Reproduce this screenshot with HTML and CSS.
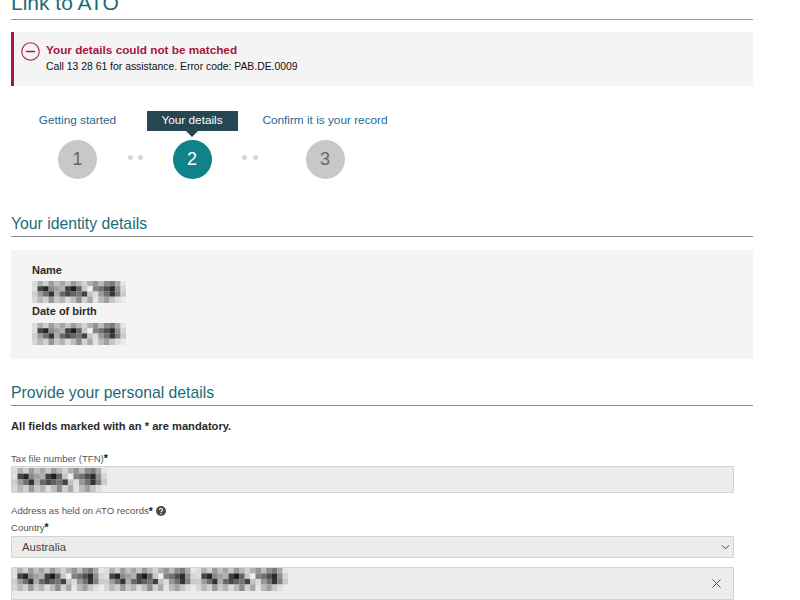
FILE: index.html
```html
<!DOCTYPE html>
<html lang="en">
<head>
<meta charset="utf-8">
<title>Link to ATO</title>
<link rel="stylesheet" href="styles.css">
</head>
<body>
<svg class="defs" width="0" height="0" aria-hidden="true">
  <defs>
    <filter id="soft" x="-5%" y="-5%" width="110%" height="110%"><feGaussianBlur stdDeviation="0.07 0.09"/></filter>
    <g id="mosaic" filter="url(#soft)">
      <rect width="17" height="4.2" fill="#d0d0d0"/>
      <!-- row 0 -->
      <rect x="0" y="0" width="1" height="1" fill="#dcdcdc"/><rect x="1" y="0" width="1" height="1" fill="#b0b0b0"/><rect x="2" y="0" width="1" height="1" fill="#cfcfcf"/><rect x="3" y="0" width="1" height="1" fill="#9c9c9c"/><rect x="4" y="0" width="1" height="1" fill="#c0c0c0"/><rect x="5" y="0" width="1" height="1" fill="#a6a6a6"/><rect x="6" y="0" width="1" height="1" fill="#c6c6c6"/><rect x="7" y="0" width="1" height="1" fill="#9a9a9a"/><rect x="8" y="0" width="1" height="1" fill="#b8b8b8"/><rect x="9" y="0" width="1" height="1" fill="#d4d4d4"/><rect x="10" y="0" width="1" height="1" fill="#b0b0b0"/><rect x="11" y="0" width="1" height="1" fill="#949494"/><rect x="12" y="0" width="1" height="1" fill="#bcbcbc"/><rect x="13" y="0" width="1" height="1" fill="#8c8c8c"/><rect x="14" y="0" width="1" height="1" fill="#7a7a7a"/><rect x="15" y="0" width="1" height="1" fill="#ababab"/><rect x="16" y="0" width="1" height="1" fill="#e6e6e6"/>
      <!-- row 1 -->
      <rect x="0" y="1" width="1" height="1" fill="#dedede"/><rect x="1" y="1" width="1" height="1" fill="#444444"/><rect x="2" y="1" width="1" height="1" fill="#282828"/><rect x="3" y="1" width="1" height="1" fill="#888888"/><rect x="4" y="1" width="1" height="1" fill="#a0a0a0"/><rect x="5" y="1" width="1" height="1" fill="#b0b0b0"/><rect x="6" y="1" width="1" height="1" fill="#404040"/><rect x="7" y="1" width="1" height="1" fill="#1e1e1e"/><rect x="8" y="1" width="1" height="1" fill="#646464"/><rect x="9" y="1" width="1" height="1" fill="#c8c8c8"/><rect x="10" y="1" width="1" height="1" fill="#f0f0f0"/><rect x="11" y="1" width="1" height="1" fill="#828282"/><rect x="12" y="1" width="1" height="1" fill="#707070"/><rect x="13" y="1" width="1" height="1" fill="#4e4e4e"/><rect x="14" y="1" width="1" height="1" fill="#2c2c2c"/><rect x="15" y="1" width="1" height="1" fill="#909090"/><rect x="16" y="1" width="1" height="1" fill="#d6d6d6"/>
      <!-- row 2 -->
      <rect x="0" y="2" width="1" height="1" fill="#cecece"/><rect x="1" y="2" width="1" height="1" fill="#9c9c9c"/><rect x="2" y="2" width="1" height="1" fill="#707070"/><rect x="3" y="2" width="1" height="1" fill="#323232"/><rect x="4" y="2" width="1" height="1" fill="#acacac"/><rect x="5" y="2" width="1" height="1" fill="#686868"/><rect x="6" y="2" width="1" height="1" fill="#464646"/><rect x="7" y="2" width="1" height="1" fill="#646464"/><rect x="8" y="2" width="1" height="1" fill="#747474"/><rect x="9" y="2" width="1" height="1" fill="#424242"/><rect x="10" y="2" width="1" height="1" fill="#c4c4c4"/><rect x="11" y="2" width="1" height="1" fill="#dcdcdc"/><rect x="12" y="2" width="1" height="1" fill="#989898"/><rect x="13" y="2" width="1" height="1" fill="#727272"/><rect x="14" y="2" width="1" height="1" fill="#363636"/><rect x="15" y="2" width="1" height="1" fill="#808080"/><rect x="16" y="2" width="1" height="1" fill="#cacaca"/>
      <!-- row 3 -->
      <rect x="0" y="3" width="1" height="1.2" fill="#d8d8d8"/><rect x="1" y="3" width="1" height="1.2" fill="#b8b8b8"/><rect x="2" y="3" width="1" height="1.2" fill="#d0d0d0"/><rect x="3" y="3" width="1" height="1.2" fill="#989898"/><rect x="4" y="3" width="1" height="1.2" fill="#c8c8c8"/><rect x="5" y="3" width="1" height="1.2" fill="#b4b4b4"/><rect x="6" y="3" width="1" height="1.2" fill="#dcdcdc"/><rect x="7" y="3" width="1" height="1.2" fill="#bebebe"/><rect x="8" y="3" width="1" height="1.2" fill="#8e8e8e"/><rect x="9" y="3" width="1" height="1.2" fill="#d2d2d2"/><rect x="10" y="3" width="1" height="1.2" fill="#aaaaaa"/><rect x="11" y="3" width="1" height="1.2" fill="#e4e4e4"/><rect x="12" y="3" width="1" height="1.2" fill="#bababa"/><rect x="13" y="3" width="1" height="1.2" fill="#a0a0a0"/><rect x="14" y="3" width="1" height="1.2" fill="#c6c6c6"/><rect x="15" y="3" width="1" height="1.2" fill="#dedede"/><rect x="16" y="3" width="1" height="1.2" fill="#ececec"/>
    </g>
  </defs>
</svg>

<main class="page">
  <h1 class="title">Link to ATO</h1>

  <section class="alert">
    <svg class="alert-icon" viewBox="0 0 20 20" width="19" height="19" aria-hidden="true">
      <circle cx="10" cy="10" r="9.2" fill="none" stroke="currentColor" stroke-width="1.1"/>
      <path d="M5.2 10h9.6" stroke="currentColor" stroke-width="1.5"/>
    </svg>
    <div>
      <div class="alert-title">Your details could not be matched</div>
      <div class="alert-text">Call 13 28 61 for assistance. Error code: PAB.DE.0009</div>
    </div>
  </section>

  <ol class="steps">
    <li class="step step-1">
      <span class="step-label">Getting started</span>
      <span class="step-num">1</span>
    </li>
    <li class="dots dots-1"><i></i><i></i></li>
    <li class="step step-2 is-current">
      <span class="step-label">Your details</span>
      <span class="step-num">2</span>
    </li>
    <li class="dots dots-2"><i></i><i></i></li>
    <li class="step step-3">
      <span class="step-label">Confirm it is your record</span>
      <span class="step-num">3</span>
    </li>
  </ol>

  <h2 class="heading">Your identity details</h2>
  <section class="identity">
    <div class="id-label">Name</div>
    <svg class="mosaic mosaic-name" width="94" height="22" viewBox="0 0 17 4.2" preserveAspectRatio="none" aria-hidden="true"><use href="#mosaic"/></svg>
    <div class="id-label">Date of birth</div>
    <svg class="mosaic mosaic-dob" width="94" height="22" viewBox="0 0 17 4.2" preserveAspectRatio="none" aria-hidden="true"><use href="#mosaic"/></svg>
  </section>

  <h2 class="heading heading-personal">Provide your personal details</h2>
  <p class="mandatory">All fields marked with an * are mandatory.</p>

  <label class="field-label tfn-label">Tax file number (TFN)<b>*</b></label>
  <div class="input tfn-input">
    <svg class="mosaic" width="95" height="24" viewBox="0 0 17 4.2" preserveAspectRatio="none" aria-hidden="true"><use href="#mosaic"/></svg>
  </div>

  <div class="field-label address-label">Address as held on ATO records<b>*</b>
    <svg class="help" viewBox="0 0 16 16" width="10" height="10" aria-hidden="true">
      <circle cx="8" cy="8" r="8" fill="#4a4a4a"/>
      <path d="M5.6 6.2a2.4 2.2 0 1 1 3.6 1.9c-.8.5-1.2.9-1.2 1.8" fill="none" stroke="#fff" stroke-width="1.7"/>
      <circle cx="8" cy="12.4" r="1.1" fill="#fff"/>
    </svg>
  </div>
  <label class="field-label country-label">Country<b>*</b></label>
  <div class="input select">
    <span>Australia</span>
    <svg viewBox="0 0 10 6" width="9" height="6" aria-hidden="true"><path d="M1 1l4 4 4-4" fill="none" stroke="#444" stroke-width="1.1"/></svg>
  </div>
  <div class="input address">
    <div class="address-mosaic">
      <svg class="mosaic" width="92" height="23" viewBox="0 0 17 4.2" preserveAspectRatio="none" aria-hidden="true"><use href="#mosaic"/></svg>
      <svg class="mosaic" width="92" height="23" viewBox="0 0 17 4.2" preserveAspectRatio="none" aria-hidden="true"><use href="#mosaic"/></svg>
      <svg class="mosaic" width="92" height="23" viewBox="0 0 17 4.2" preserveAspectRatio="none" aria-hidden="true"><use href="#mosaic"/></svg>
    </div>
    <svg class="clear" viewBox="0 0 10 10" width="9" height="9" aria-hidden="true"><path d="M.5.5l9 9M9.5.5l-9 9" fill="none" stroke="#444" stroke-width="1"/></svg>
  </div>
</main>
</body>
</html>
```

FILE: styles.css
```css
* { box-sizing: border-box; }
html, body { margin: 0; height: 600px; overflow: hidden; background: #fff; }
body { font-family: "Liberation Sans", Arial, sans-serif; color: #222; }
.defs { position: absolute; }
.page { width: 742px; margin-left: 11px; }

.title {
  margin: -10px 0 0;
  height: 30px;
  font-size: 21px;
  line-height: 25px;
  font-weight: 400;
  color: #1d6a77;
  border-bottom: 1px solid #999;
}

.alert {
  margin-top: 12px;
  height: 54px;
  display: flex;
  align-items: flex-start;
  gap: 6px;
  padding: 10px 0 0 7px;
  background: #f4f4f4;
  border-left: 3px solid #a6163f;
  color: #a6163f;
}
.alert-icon { flex: none; }
.alert-title { font-size: 11.75px; line-height: 15px; font-weight: 700; }
.alert-text { font-size: 10.4px; line-height: 20px; color: #111; }

.steps {
  list-style: none;
  margin: 25px 0 0;
  padding: 0;
  display: flex;
  height: 69px;
  font-size: 11.8px;
}
.step { display: flex; flex-direction: column; align-items: center; gap: 9px; }
.step-1 { width: 79px; margin-left: 27px; }
.step-2 { width: 91px; }
.step-3 { width: 126px; }
.step-label { color: #1f6a94; line-height: 18px; height: 20px; white-space: nowrap; }
.step-num {
  width: 39px; height: 39px; border-radius: 50%;
  background: #c8c8c8; color: #666;
  display: flex; align-items: center; justify-content: center;
  font-size: 18px;
}
.is-current .step-label {
  position: relative;
  width: 91px;
  text-align: center;
  background: #264653; color: #fff;
}
.is-current .step-label::after {
  content: "";
  position: absolute; left: 39.5px; top: 20px;
  border: 6px solid transparent; border-bottom: 0; border-top-color: #264653;
}
.is-current .step-num { background: #0f8387; color: #fff; }
.dots { display: flex; gap: 5.5px; align-items: flex-start; padding-top: 44px; justify-content: center; }
.dots i { width: 5px; height: 5px; border-radius: 50%; background: #d6d6d6; }
.dots-1 { width: 29.5px; padding-left: 7.5px; }
.dots-2 { width: 24.5px; }

.heading {
  margin: 0;
  height: 29px;
  padding-top: 5px;
  font-size: 15.75px;
  line-height: 22px;
  font-weight: 400;
  color: #1d6a77;
  border-bottom: 1px solid #8c8c8c;
}
.steps + .heading { margin-top: 28px; }

.identity {
  margin-top: 13px;
  height: 109px;
  padding: 12px 21px;
  background: #f4f4f4;
}
.id-label { font-size: 11px; font-weight: 700; line-height: 16px; color: #2a2a2a; }
.mosaic { display: block; flex: none; }
.mosaic-name { margin-top: 3px; }
.mosaic-dob { margin-top: 4px; }

.heading-personal { margin-top: 18px; }
.mandatory { margin: 13px 0 0; font-size: 11.15px; line-height: 14px; font-weight: 700; color: #2a2a2a; }

.field-label { display: block; font-size: 9.6px; line-height: 13px; color: #555; }
.field-label b { color: #111; font-size: 10.5px; line-height: 10px; }
.tfn-label { margin-top: 19px; }
.address-label { margin-top: 11px; display: flex; align-items: center; }
.help { margin-left: 3px; }
.country-label { margin-top: 4px; }

.input {
  width: 723px;
  background: #ececec;
  border: 1px solid #d2d2d2;
  border-radius: 1px;
  display: flex;
  align-items: center;
  justify-content: space-between;
}
.tfn-input { margin-top: 1px; height: 27px; }
.select { margin-top: 2px; height: 22px; padding: 0 3px 0 10px; font-size: 11.3px; color: #444; }
.address { margin-top: 9px; height: 33px; padding: 0 12px 0 0; align-items: flex-start; }
.clear { margin-top: 11px; }
.address-mosaic { display: flex; }
```
